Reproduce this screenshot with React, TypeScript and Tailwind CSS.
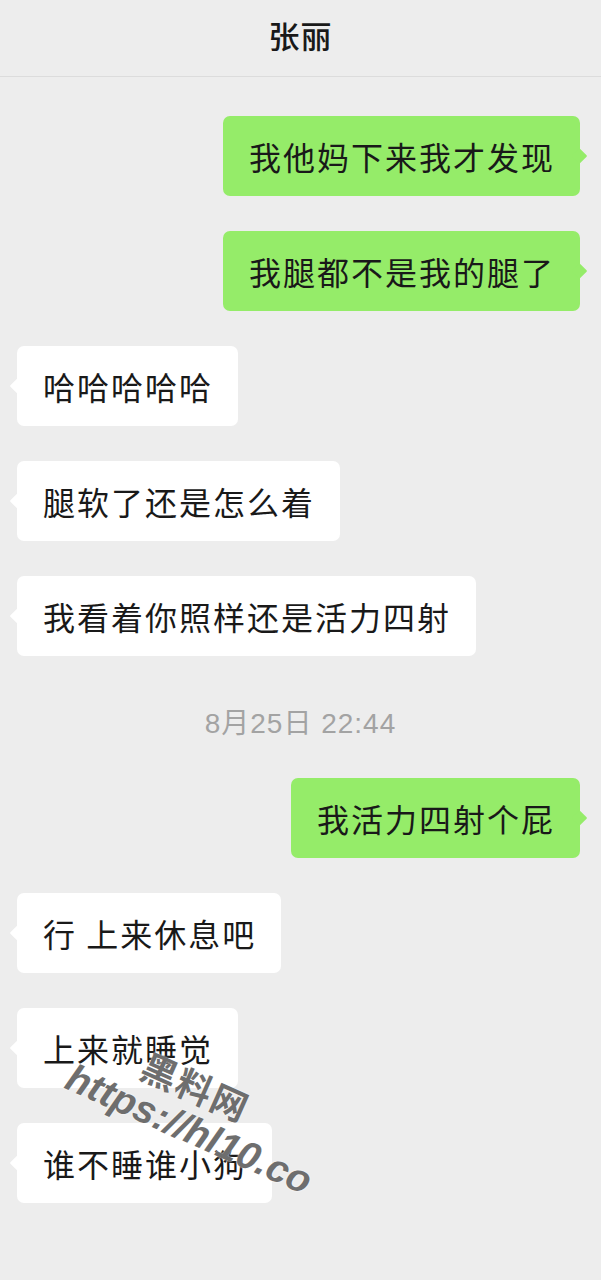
import type { ReactNode } from 'react';

type Msg =
  | { kind: 'me'; text: string }
  | { kind: 'them'; text: string }
  | { kind: 'time'; text: string };

const messages: Msg[] = [
  { kind: 'me', text: '我他妈下来我才发现' },
  { kind: 'me', text: '我腿都不是我的腿了' },
  { kind: 'them', text: '哈哈哈哈哈' },
  { kind: 'them', text: '腿软了还是怎么着' },
  { kind: 'them', text: '我看着你照样还是活力四射' },
  { kind: 'time', text: '8月25日 22:44' },
  { kind: 'me', text: '我活力四射个屁' },
  { kind: 'them', text: '行 上来休息吧' },
  { kind: 'them', text: '上来就睡觉' },
  { kind: 'them', text: '谁不睡谁小狗' }
];

const cjk = "font-['Noto_Sans_CJK_SC','Noto_Sans',sans-serif]";

function Bubble({ side, children }: { side: 'me' | 'them'; children: ReactNode }) {
  const mine = side === 'me';
  return (
    <div className={mine ? 'flex justify-end pr-[21px]' : 'flex justify-start pl-[17px]'}>
      <div
        className={
          'relative rounded-[7px] py-[20px] pl-[26px] pr-[25px] text-[32px] leading-[40px] tracking-[2px] text-[#191919] ' +
          (mine ? 'bg-[#95ec69]' : 'bg-white')
        }
      >
        <span
          className={
            'absolute top-1/2 h-[11px] w-[11px] -translate-y-1/2 rotate-45 rounded-[1px] ' +
            (mine ? '-right-[5px] bg-[#95ec69]' : '-left-[5px] bg-white')
          }
        />
        <span className="relative whitespace-pre">{children}</span>
      </div>
    </div>
  );
}

export default function App() {
  return (
    <div className={`relative min-h-[1280px] w-full overflow-hidden bg-[#ededed] ${cjk}`}>
      <header className="flex h-[77px] items-center justify-center border-b border-[#dcdcdc] pb-[6px]">
        <h1 className="text-[31px] font-medium tracking-[1px] text-[#191919]">张丽</h1>
      </header>

      <div className="flex flex-col gap-[35px] pt-[39px]">
        {messages.map((m, i) =>
          m.kind === 'time' ? (
            <div
              key={i}
              className="flex justify-center pb-[4px] pt-[18px] font-['Liberation_Sans','Noto_Sans_CJK_SC',sans-serif] text-[28px] leading-[30px] tracking-[1px] text-[#a3a3a3]"
            >
              {m.text}
            </div>
          ) : (
            <Bubble key={i} side={m.kind}>
              {m.text}
            </Bubble>
          )
        )}
      </div>

      {/* watermark */}
      <div className="pointer-events-none absolute left-[94px] top-[1018px] origin-top-left rotate-[24deg] text-[#6e6e6e] [text-shadow:0_0_2px_#ffffff]">
        <div className="pl-[64px] text-[36px] font-bold leading-[40px] tracking-[2px]">黑料网</div>
        <div className="font-['Liberation_Sans',Arial,sans-serif] text-[39px] font-bold italic leading-[46px]">
          https://hl10.co
        </div>
      </div>
    </div>
  );
}
